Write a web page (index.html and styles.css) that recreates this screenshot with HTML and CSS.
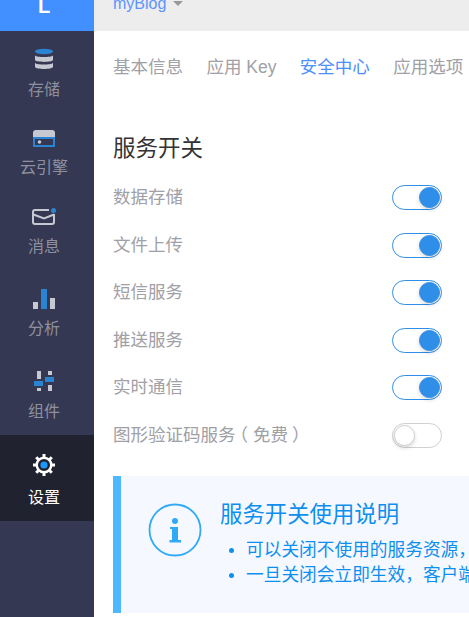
FILE: index.html
```html
<!DOCTYPE html>
<html lang="zh-CN">
<head>
<meta charset="utf-8">
<title>服务开关</title>
<link rel="stylesheet" href="styles.css">
</head>
<body>
<div class="app">
  <aside class="sidebar">
    <div class="logo"><span class="logo-text">L</span></div>
    <nav class="nav">
      <a class="nav-item nav-store">
        <svg class="nav-icon" viewBox="0 0 30 28"><ellipse class="c-blue" cx="15" cy="6.500" rx="9" ry="2.700"/><path class="c-gray" d="M6 10.500c2 2 16 2 18 0v4.500c-1 2.500-17 2.500-18 0z"/><path class="c-gray" d="M6 18c2 2 16 2 18 0v4c-1 2.600-17 2.600-18 0z"/></svg>
        <span class="nav-label">存储</span>
      </a>
      <a class="nav-item nav-cloud">
        <svg class="nav-icon" viewBox="0 0 30 28"><path class="c-gray" d="M4 12V8a3 3 0 0 1 3-3h16a3 3 0 0 1 3 3v4z"/><rect class="c-blue" x="4" y="12" width="22" height="10"/><rect class="c-dark" x="6" y="14" width="18" height="6"/><circle class="c-gray" cx="10.500" cy="17" r="1.800"/></svg>
        <span class="nav-label">云引擎</span>
      </a>
      <a class="nav-item nav-msg">
        <svg class="nav-icon" viewBox="0 0 30 28"><path class="s-gray" d="M20 6H6a2 2 0 0 0-2 2v10a2 2 0 0 0 2 2h17a2 2 0 0 0 2-2v-8"/><path class="s-gray" d="M4.500 10.500l10.500 4 10-4"/><circle class="c-blue" cx="24.500" cy="6.500" r="2.500"/></svg>
        <span class="nav-label">消息</span>
      </a>
      <a class="nav-item nav-chart">
        <svg class="nav-icon" viewBox="0 0 30 28"><rect class="c-gray" x="4" y="17" width="5" height="7"/><rect class="c-blue" x="12" y="4" width="6" height="20"/><rect class="c-gray" x="21" y="13" width="5" height="11"/></svg>
        <span class="nav-label">分析</span>
      </a>
      <a class="nav-item nav-widget">
        <svg class="nav-icon" viewBox="0 0 30 28"><rect class="c-gray" x="8" y="5" width="4" height="8"/><rect class="c-blue" x="5" y="15" width="9" height="5"/><rect class="c-gray" x="8" y="22" width="4" height="3"/><rect class="c-gray" x="19" y="5" width="4" height="4"/><rect class="c-blue" x="16" y="11" width="9" height="5"/><rect class="c-gray" x="19" y="19" width="4" height="6"/></svg>
        <span class="nav-label">组件</span>
      </a>
      <a class="nav-item nav-settings nav-active">
        <svg class="nav-icon" viewBox="0 0 30 28"><path class="s-gear" d="M15 3v4M15 21v4M4 14h4M22 14h4M7.200 6.200l2.800 2.800M20 19l2.800 2.800M7.200 21.800l2.800-2.800M20 9l2.800-2.800"/><circle class="s-ring" cx="15" cy="14" r="7.300"/><circle class="c-bright" cx="15" cy="14" r="3.600"/></svg>
        <span class="nav-label">设置</span>
      </a>
    </nav>
  </aside>
  <main class="main">
    <header class="topbar">
      <span class="app-name">myBlog</span>
      <span class="caret"></span>
    </header>
    <div class="tabs">
      <a class="tab">基本信息</a>
      <a class="tab">应用 Key</a>
      <a class="tab tab-active">安全中心</a>
      <a class="tab">应用选项</a>
    </div>
    <h2 class="section-title">服务开关</h2>
    <ul class="switches">
      <li class="switch-row"><span class="switch-label">数据存储</span><span class="toggle toggle-on"><i class="knob"></i></span></li>
      <li class="switch-row"><span class="switch-label">文件上传</span><span class="toggle toggle-on"><i class="knob"></i></span></li>
      <li class="switch-row"><span class="switch-label">短信服务</span><span class="toggle toggle-on"><i class="knob"></i></span></li>
      <li class="switch-row"><span class="switch-label">推送服务</span><span class="toggle toggle-on"><i class="knob"></i></span></li>
      <li class="switch-row"><span class="switch-label">实时通信</span><span class="toggle toggle-on"><i class="knob"></i></span></li>
      <li class="switch-row"><span class="switch-label">图形验证码服务<span class="paren-open">（</span>免费<span class="paren-close">）</span></span><span class="toggle"><i class="knob"></i></span></li>
    </ul>
    <section class="notice">
      <svg class="notice-icon" viewBox="0 0 54 54"><circle class="notice-ring" cx="27" cy="27" r="25.500"/><circle class="notice-fill" cx="27" cy="18" r="3"/><path class="notice-fill" d="M22 24h8v13h3v2.500H21.500V37H24V26h-2z"/></svg>
      <div class="notice-body">
        <h3 class="notice-title">服务开关使用说明</h3>
        <ul class="notice-list">
          <li>可以关闭不使用的服务资源，</li>
          <li>一旦关闭会立即生效，客户端</li>
        </ul>
      </div>
    </section>
  </main>
</div>
</body>
</html>
```
FILE: styles.css
```css
* { box-sizing: border-box; }
html, body { margin: 0; height: 100%; overflow: hidden; background: #fff; }
body { font-family: "Liberation Sans", "Noto Sans CJK SC", sans-serif; }
ul { list-style: none; margin: 0; padding: 0; }

.app { display: flex; width: 469px; height: 617px; overflow: hidden; }

.sidebar { flex: 0 0 94px; background: #353852; }
.logo { height: 31px; background: #4290ff; display: flex; justify-content: center; align-items: flex-end; padding: 0 6px 15px 0; }
.logo-text { color: #fff; font-size: 20px; font-weight: 700; line-height: 20px; }

.nav { display: flex; flex-direction: column; }
.nav-item { display: flex; flex-direction: column; align-items: center; padding: var(--top) 6px 0 0; height: var(--h); gap: var(--gap); color: #8e909f; }
.nav-icon { width: 30px; height: 28px; flex: none; display: block; }
.nav-label { font-size: 16px; line-height: 24px; }
.nav-store { --top: 14px; --gap: 5px; --h: 79px; }
.nav-cloud { --top: 15px; --gap: 3px; --h: 79px; }
.nav-msg { --top: 15px; --gap: 3px; --h: 79px; }
.nav-chart { --top: 17px; --gap: 4px; --h: 82px; }
.nav-widget { --top: 16px; --gap: 6px; --h: 85px; }
.nav-settings { --top: 16px; --gap: 7px; --h: 86px; }
.nav-active { background: #20222f; color: #fff; }

.c-blue { fill: #2a84d2; }
.c-gray { fill: #c6c8d2; }
.c-dark { fill: #353852; }
.c-bright { fill: #1e96fa; }
.s-gray { fill: none; stroke: #c6c8d2; stroke-width: 2; }
.s-gear { fill: none; stroke: #fff; stroke-width: 3; }
.s-ring { fill: #20222f; stroke: #fff; stroke-width: 2.500; }

.main { flex: 1; min-width: 0; }
.topbar { height: 31px; background: #ededed; padding: 0 0 20px 19px; display: flex; align-items: flex-end; overflow: hidden; }
.app-name { color: #5b96fb; font-size: 16px; line-height: 16px; margin-bottom: -1px; }
.caret { width: 0; height: 0; margin: 0 0 5px 7px; border-style: solid; border-width: 5px 5px 0; border-color: #999 transparent transparent; }

.tabs { height: 72px; padding-left: 19px; display: flex; align-items: center; gap: 23.400px; white-space: nowrap; }
.tab { font-size: 17.500px; color: #a0a0a6; line-height: 24px; }
.tab-active { color: #4d8ffa; }

.section-title { margin: 29px 0 19px 19px; font-size: 22.500px; font-weight: 400; line-height: 34px; color: #333; }

.switches { display: flex; flex-direction: column; gap: 22.500px; padding: 0 27px 0 19px; }
.switch-row { display: flex; justify-content: space-between; align-items: center; height: 25px; }
.switch-label { font-size: 17.500px; color: #a0a0a6; line-height: 25px; }
.paren-open { display: inline-block; transform: translateX(-5px); }
.paren-close { display: inline-block; transform: translateX(4px); }
.toggle { width: 50px; height: 25px; border: 1px solid #d0d0d0; border-radius: 13px; background: #fff; display: flex; justify-content: flex-start; align-items: center; padding: 0 1px; }
.knob { width: 21px; height: 21px; border-radius: 50%; background: #fff; border: 1px solid #cfcfcf; box-shadow: 0 2px 4px rgba(0, 0, 0, .15); }
.toggle-on { border-color: #2f8fe8; justify-content: flex-end; }
.toggle-on .knob { background: #2f8fe8; border-color: #2f8fe8; }

.notice { margin: 28.500px 0 0 19px; height: 137px; width: 700px; background: #f5f9ff; border-left: 8px solid #4db8ff; display: flex; padding: 27px 0 0 27px; gap: 18px; color: #0e8fee; }
.notice-icon { width: 54px; height: 54px; flex: none; }
.notice-ring { fill: none; stroke: #30aaf6; stroke-width: 1.800; }
.notice-fill { fill: #30aaf6; }
.notice-body { padding-top: 0; margin-top: -3px; }
.notice-title { margin: 0 0 8px; font-size: 22.400px; font-weight: 400; line-height: 30px; }
.notice-list { padding-left: 26px; }
.notice-list li { font-size: 17.700px; line-height: 24.500px; white-space: nowrap; position: relative; }
.notice-list li::before { content: ""; position: absolute; left: -17px; top: 10px; width: 5px; height: 5px; border-radius: 50%; background: #0e8fee; }
```
